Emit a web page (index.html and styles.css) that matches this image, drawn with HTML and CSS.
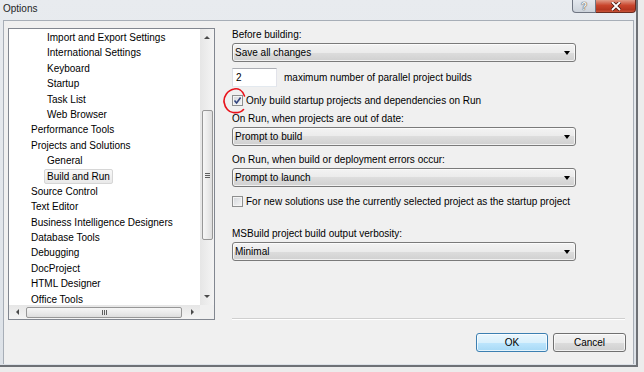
FILE: index.html
```html
<!DOCTYPE html>
<html lang="en">
<head>
  <meta charset="UTF-8">
  <title>Options</title>
  <link rel="stylesheet" href="styles.css">
</head>
<body>

  <div class="window">
    <div class="titlebar">
      <span class="title">Options</span>
      <div class="caption">
        <span class="cap-btn help">?</span>
        <span class="cap-btn close">
          <svg width="12" height="9" viewBox="0 0 12 9"><path d="M2 0 L10 8 M10 0 L2 8" stroke="#4a1a12" stroke-width="3.4"/><path d="M2 0 L10 8 M10 0 L2 8" stroke="#fff" stroke-width="1.8"/></svg>
        </span>
      </div>
    </div>

    <div class="client">
      <div class="main">
        <!-- Category tree -->
        <div class="tree">
          <div class="tree-top">
            <ul class="tree-list">
              <li class="sub"><span>Import and Export Settings</span></li>
              <li class="sub"><span>International Settings</span></li>
              <li class="sub"><span>Keyboard</span></li>
              <li class="sub"><span>Startup</span></li>
              <li class="sub"><span>Task List</span></li>
              <li class="sub"><span>Web Browser</span></li>
              <li><span>Performance Tools</span></li>
              <li><span>Projects and Solutions</span></li>
              <li class="sub"><span>General</span></li>
              <li class="sub selected"><span>Build and Run</span></li>
              <li><span>Source Control</span></li>
              <li><span>Text Editor</span></li>
              <li><span>Business Intelligence Designers</span></li>
              <li><span>Database Tools</span></li>
              <li><span>Debugging</span></li>
              <li><span>DocProject</span></li>
              <li><span>HTML Designer</span></li>
              <li><span>Office Tools</span></li>
            </ul>
            <div class="vscroll">
              <div class="sb-btn"><span class="tri up"></span></div>
              <div class="vtrack"><div class="vthumb"><span class="grip-h"></span></div></div>
              <div class="sb-btn"><span class="tri down"></span></div>
            </div>
          </div>
          <div class="tree-bottom">
            <div class="hscroll">
              <div class="sb-btn-h"><span class="tri left"></span></div>
              <div class="hthumb"><span class="grip-v"></span></div>
              <div class="sb-btn-h"><span class="tri right"></span></div>
            </div>
            <div class="corner"></div>
          </div>
        </div>

        <!-- Build and Run settings -->
        <div class="settings">
          <div class="label">Before building:</div>
          <div class="combo"><span>Save all changes</span><span class="combo-arrow"></span></div>

          <div class="num-row">
            <div class="num-box">2</div>
            <span>maximum number of parallel project builds</span>
          </div>

          <div class="check-row first">
            <span class="check checked">
              <svg width="9" height="9" viewBox="0 0 9 9"><path d="M1.5 4.5 L3.6 7 L7.6 1.5" fill="none" stroke="#33457e" stroke-width="1.6"/></svg>
            </span>
            <span>Only build startup projects and dependencies on Run</span>
            <svg class="annotation" width="26" height="28" viewBox="0 0 26 28">
              <path d="M22.5 10 C20.5 4, 16 2, 12 3 C5 4.5, 1.5 11, 2 16 C3 22, 7 26.5, 11 26.5 C15 27, 19.5 26, 21.5 23.5" fill="none" stroke="#e8131b" stroke-width="1.6" stroke-linecap="round"/>
            </svg>
          </div>

          <div class="label out-of-date">On Run, when projects are out of date:</div>
          <div class="combo"><span>Prompt to build</span><span class="combo-arrow"></span></div>

          <div class="label errors">On Run, when build or deployment errors occur:</div>
          <div class="combo"><span>Prompt to launch</span><span class="combo-arrow"></span></div>

          <div class="check-row second">
            <span class="check"></span>
            <span>For new solutions use the currently selected project as the startup project</span>
          </div>

          <div class="label verbosity">MSBuild project build output verbosity:</div>
          <div class="combo"><span>Minimal</span><span class="combo-arrow"></span></div>
        </div>
      </div>

      <div class="footer">
        <button class="btn default">OK</button>
        <button class="btn">Cancel</button>
      </div>
    </div>
  </div>

</body>
</html>
```

FILE: styles.css
```css
body {
  margin: 0;
  background: #ececec;
  font-family: "Liberation Sans", Arial, sans-serif;
  font-size: 10px;
  color: #000;
}

/* Window frame */
.window {
  width: 636px;
  height: 365px;
  border-right: 2px solid #6e7176;
  border-bottom: 2px solid #6e7176;
  background: linear-gradient(#e8ebef, #dde2e8);
  display: flex;
  flex-direction: column;
}

.titlebar {
  height: 20px;
  flex-shrink: 0;
  display: flex;
  justify-content: space-between;
  align-items: flex-start;
  padding-left: 3px;
}

.title {
  line-height: 15px;
  margin-top: 1px;
  color: #1e1e1e;
}

.caption {
  display: flex;
}

.cap-btn {
  height: 13px;
  box-sizing: border-box;
  border: 1px solid #6f7582;
  border-top: none;
  display: flex;
  justify-content: center;
  align-items: flex-end;
  line-height: 10px;
  font-weight: bold;
}

.help {
  width: 24px;
  border-radius: 0 0 0 4px;
  background: linear-gradient(#e4e8ee, #cdd3db);
  color: #f4f4f4;
  text-shadow: 0 0 1px #444, 0 0 1px #444;
}

.close {
  width: 40px;
  border-left: none;
  border-color: #6b2a1e;
  border-radius: 0 0 4px 0;
  background: linear-gradient(#e09a86, #c9452c 45%, #b5361f 80%, #c8553a);
  align-items: flex-start;
  padding-top: 2px;
}

.client {
  flex: 1;
  margin: 0 2px 1px 3px;
  border: 1px solid #a7aeb7;
  border-bottom: none;
  background: #f0f0f0;
  padding: 7px 7px 0 4px;
}

.main {
  display: flex;
  align-items: flex-start;
}

/* Tree */
.tree {
  width: 207px;
  height: 292px;
  box-sizing: border-box;
  border: 1px solid #828790;
  background: #fff;
  display: flex;
  flex-direction: column;
}

.tree-top {
  display: flex;
  height: 276px;
}

.tree-list {
  list-style: none;
  margin: 0;
  padding: 1px 0 0;
  width: 191px;
  overflow: hidden;
}

.tree-list li {
  height: 15.4px;
  display: flex;
  padding-left: 19px;
}

.tree-list li.sub {
  padding-left: 35px;
}

.tree-list span {
  line-height: 13.4px;
  border: 1px solid transparent;
  border-radius: 2px;
  padding: 0 2px;
  white-space: nowrap;
}

.tree-list li.selected span {
  border-color: #d6d6d6;
  background: linear-gradient(#f8f8f8, #e9e9e9);
}

/* Scrollbars */
.vscroll {
  width: 14px;
  display: flex;
  flex-direction: column;
  background: linear-gradient(to right, #e6e6e6, #f4f4f4);
}

.sb-btn {
  height: 17px;
  display: flex;
  justify-content: center;
  align-items: center;
}

.vtrack {
  flex: 1;
}

.vthumb {
  margin: 64px 0 0 2px;
  width: 11px;
  height: 130px;
  box-sizing: border-box;
  border: 1px solid #979797;
  border-radius: 2px;
  background: linear-gradient(to right, #f6f6f6, #ebebeb 50%, #dedede);
  display: flex;
  justify-content: center;
  align-items: center;
}

.grip-h {
  width: 5px;
  height: 5px;
  background: repeating-linear-gradient(#5f5f5f 0 1px, transparent 1px 2px);
}

.tree-bottom {
  display: flex;
  height: 14px;
}

.hscroll {
  width: 191px;
  display: flex;
  align-items: center;
  background: linear-gradient(#e6e6e6, #f4f4f4);
}

.sb-btn-h {
  width: 16px;
  height: 14px;
  display: flex;
  justify-content: center;
  align-items: center;
}

.hthumb {
  width: 156px;
  height: 11px;
  margin: 0 auto 0 1px;
  box-sizing: border-box;
  border: 1px solid #979797;
  border-radius: 2px;
  background: linear-gradient(#f6f6f6, #ebebeb 50%, #dedede);
  display: flex;
  justify-content: center;
  align-items: center;
}

.grip-v {
  width: 5px;
  height: 5px;
  background: repeating-linear-gradient(to right, #5f5f5f 0 1px, transparent 1px 2px);
}

.corner {
  width: 14px;
  background: #f0f0f0;
}

.tri {
  width: 0;
  height: 0;
  border: 3px solid transparent;
}

.tri.up { border-bottom-color: #4a4a4a; border-top-width: 0; }
.tri.down { border-top-color: #4a4a4a; border-bottom-width: 0; }
.tri.left { border-right-color: #4a4a4a; border-left-width: 0; }
.tri.right { border-left-color: #4a4a4a; border-right-width: 0; }

/* Settings */
.settings {
  margin-left: 17px;
  width: 393px;
  height: 291px;
  box-sizing: border-box;
  border-bottom: 1px solid #cfcfcf;
  box-shadow: 0 1px #fff;
}

.label {
  line-height: 13px;
  margin-bottom: 2px;
}

.label.out-of-date { margin-top: 5px; }
.label.errors { margin-top: 7px; }
.label.verbosity { margin-top: 19px; }

.combo {
  width: 344px;
  height: 19px;
  box-sizing: border-box;
  border: 1px solid #7a7a7a;
  border-radius: 3px;
  background: linear-gradient(#f3f3f3, #ebebeb 50%, #dddddd 50%, #d0d0d0);
  box-shadow: inset 0 0 0 1px rgba(255, 255, 255, 0.7);
  display: flex;
  justify-content: space-between;
  align-items: center;
  padding: 0 5px 0 2px;
}

.combo-arrow {
  width: 0;
  height: 0;
  border-left: 3.5px solid transparent;
  border-right: 3.5px solid transparent;
  border-top: 4px solid #000;
}

.num-row {
  margin-top: 6px;
  display: flex;
  align-items: center;
  gap: 7px;
}

.num-box {
  width: 45px;
  height: 19px;
  box-sizing: border-box;
  border: 1px solid;
  border-color: #abadb3 #e2e3ea #e3e9ef #dbdfe6;
  background: #fff;
  line-height: 17px;
  padding-left: 3px;
}

.check-row {
  position: relative;
  height: 13px;
  display: flex;
  align-items: center;
  gap: 3px;
  line-height: 13px;
}

.check-row.first { margin-top: 7px; }
.check-row.second { margin-top: 8px; }

.check {
  width: 11px;
  height: 11px;
  box-sizing: border-box;
  border: 1px solid #8e8f8f;
  background: linear-gradient(135deg, #d3d6db, #f6f6f6);
  box-shadow: inset 0 0 0 1px #f4f4f4;
  display: flex;
  justify-content: center;
  align-items: center;
}

.annotation {
  position: absolute;
  left: -10px;
  top: -8px;
}

/* Dialog buttons */
.footer {
  display: flex;
  justify-content: flex-end;
  gap: 5px;
  margin-top: 13px;
}

.btn {
  width: 73px;
  height: 19px;
  padding: 0;
  font: inherit;
  color: #000;
  border: 1px solid #707070;
  border-radius: 3px;
  background: linear-gradient(#f2f2f2, #ebebeb 50%, #dddddd 50%, #cfcfcf);
  box-shadow: inset 0 0 0 1px rgba(255, 255, 255, 0.7);
}

.btn.default {
  width: 72px;
  border-color: #3c7fb1;
  background: linear-gradient(#eaf6fd, #d9f0fc 50%, #bee6fd 50%, #a7d9f5);
}
```
